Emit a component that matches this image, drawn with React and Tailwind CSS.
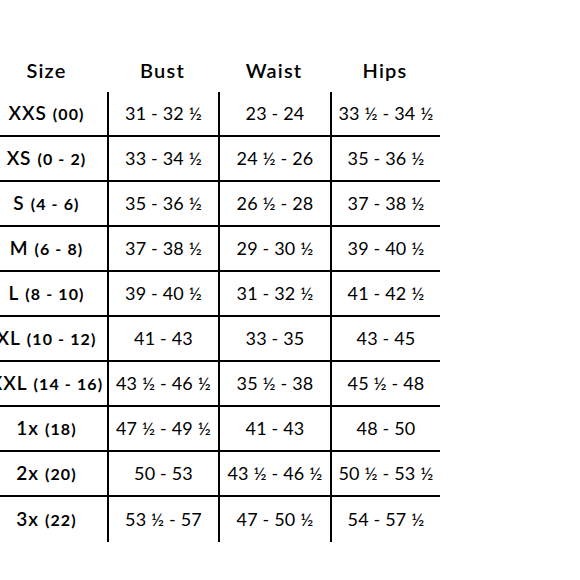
import React from 'react';

const rows = [
  { size: 'XXS', range: '(00)', bust: '31 - 32 ½', waist: '23 - 24', hips: '33 ½ - 34 ½' },
  { size: 'XS', range: '(0 - 2)', bust: '33 - 34 ½', waist: '24 ½ - 26', hips: '35 - 36 ½' },
  { size: 'S', range: '(4 - 6)', bust: '35 - 36 ½', waist: '26 ½ - 28', hips: '37 - 38 ½' },
  { size: 'M', range: '(6 - 8)', bust: '37 - 38 ½', waist: '29 - 30 ½', hips: '39 - 40 ½' },
  { size: 'L', range: '(8 - 10)', bust: '39 - 40 ½', waist: '31 - 32 ½', hips: '41 - 42 ½' },
  { size: 'XL', range: '(10 - 12)', bust: '41 - 43', waist: '33 - 35', hips: '43 - 45' },
  { size: 'XXL', range: '(14 - 16)', bust: '43 ½ - 46 ½', waist: '35 ½ - 38', hips: '45 ½ - 48' },
  { size: '1x', range: '(18)', bust: '47 ½ - 49 ½', waist: '41 - 43', hips: '48 - 50' },
  { size: '2x', range: '(20)', bust: '50 - 53', waist: '43 ½ - 46 ½', hips: '50 ½ - 53 ½' },
  { size: '3x', range: '(22)', bust: '53 ½ - 57', waist: '47 - 50 ½', hips: '54 - 57 ½' },
];

const cols = 'grid grid-cols-[121px_111px_112px_110px]';
const cell = 'flex items-center justify-center whitespace-nowrap border-l-2 border-black text-[18px] font-normal tracking-[0.01em]';

export default function App() {
  return (
    <div className="w-[580px] h-[580px] bg-white overflow-hidden text-black font-['Lato',sans-serif]">
      <div className="ml-[-14px] pt-[48px] w-[454px]">
        {/* header */}
        <div className={`${cols} h-[44px] items-center text-[20px] font-semibold tracking-[0.06em]`}>
          <div className="text-center">Size</div>
          <div className="text-center">Bust</div>
          <div className="text-center">Waist</div>
          <div className="text-center">Hips</div>
        </div>

        {rows.map((r, i) => (
          <div
            key={r.size}
            className={`${cols} h-[45px] ${i < rows.length - 1 ? 'border-b-2 border-black' : ''}`}
          >
            <div className="flex items-center justify-center whitespace-nowrap">
              <span className="text-[19px] font-semibold tracking-[0.05em]">{r.size}</span>
              <span className="text-[16px] font-bold tracking-[0.07em] ml-[6px]">{r.range}</span>
            </div>
            <div className={cell}>{r.bust}</div>
            <div className={cell}>{r.waist}</div>
            <div className={cell}>{r.hips}</div>
          </div>
        ))}
      </div>
    </div>
  );
}
